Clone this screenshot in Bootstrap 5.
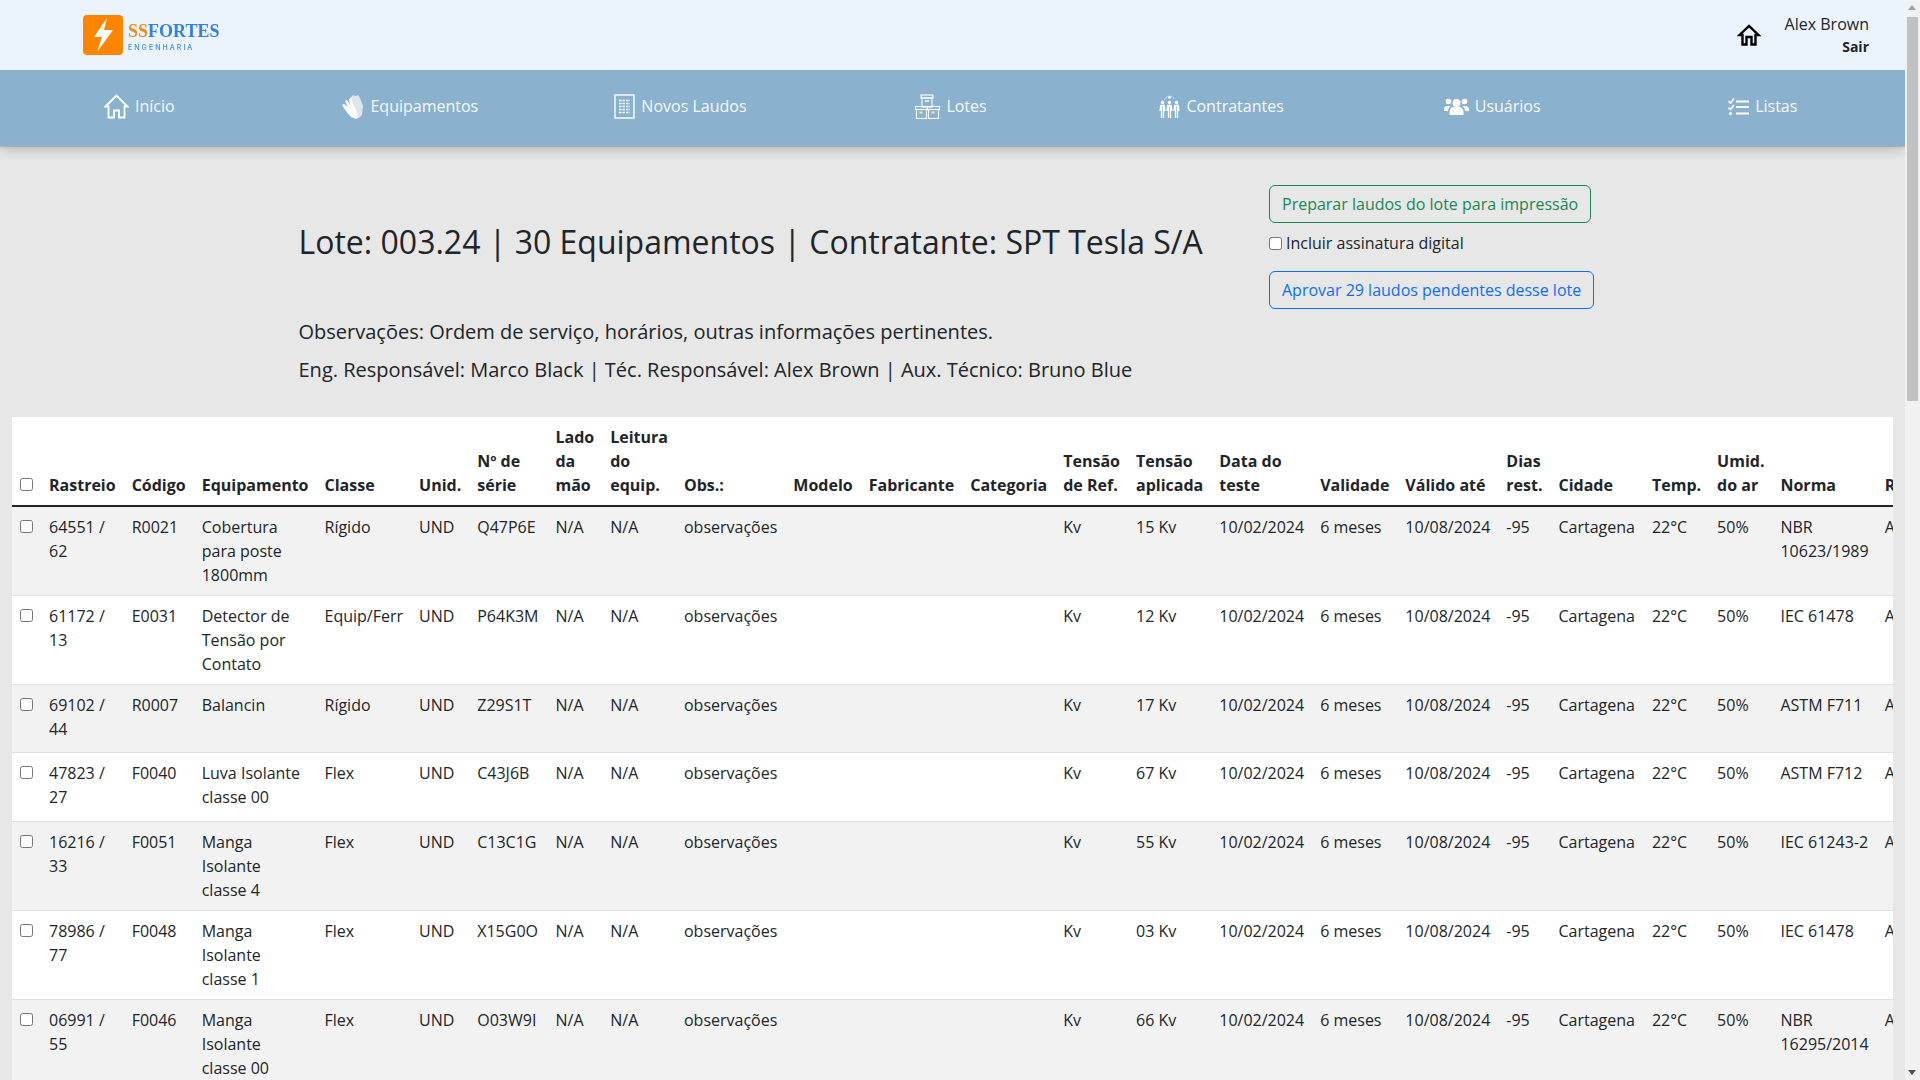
<!DOCTYPE html>
<html lang="pt-BR">
<head>
  <meta charset="UTF-8" />
  <meta name="viewport" content="width=device-width, initial-scale=1" />
  <title>Lote 003.24</title>
  <link href="https://cdn.jsdelivr.net/npm/bootstrap@5.3.3/dist/css/bootstrap.min.css" rel="stylesheet" />
  <style>
    body {
      background-color: #e7e7e7;
      font-family: "Open Sans", sans-serif;
      color: #212529;
      margin-right: 15px;
    }
    .topo {
      height: 70px;
      background-color: #ebf4fc;
      padding: 0 36px 0 83px;
      position: relative;
      z-index: 1;
    }
    .logo-box {
      width: 40px;
      height: 40px;
      background-color: #ff8500;
      border-radius: 4px;
    }
    .logo-texto {
      margin: 6px 0 0 5px;
      filter: blur(.35px);
    }
    .logo-nome {
      font-family: "Liberation Serif", serif;
      font-weight: 700;
      font-size: 18px;
      line-height: 14px;
      color: #2f7fe8;
    }
    .logo-nome span { color: #f28a1c; }
    .logo-sub {
      font-family: "Inter", sans-serif;
      font-size: 7px;
      line-height: 8px;
      letter-spacing: 2.05px;
      font-weight: 500;
      color: #3d8ae6;
      margin-top: 6px;
    }
    .user-nome { line-height: 24px; }
    .user-sair { font-size: 14px; font-weight: 700; line-height: 22px; }
    .menu {
      height: 76px;
      background-color: #8ab1ce;
      padding: 0 7px 0 4px;
      box-shadow: 0 1px 1px rgba(0,0,0,.14), 0 4px 12px rgba(0,0,0,.2);
      position: relative;
    }
    .menu .nav-link {
      height: 76px;
      display: flex;
      align-items: center;
      justify-content: center;
      gap: 6px;
      padding: 0 0 4px;
      color: #f6f9fb;
    }
    .cabecalho {
      padding: 39px 0 0 298.5px;
    }
    .cabecalho-esq { width: 970.5px; }
    .lote-titulo {
      font-size: 32px;
      line-height: 38px;
      font-weight: 400;
      margin: 38px 0 56px;
    }
    .lote-info {
      font-size: 20px;
      line-height: 30px;
      margin-bottom: 8px;
    }
    .assinatura { line-height: 24px; margin: 8px 0 16px; }
    .assinatura input { width: 13px; height: 13px; margin: 0 4px 0 0; vertical-align: -1px; }
    .tabela-caixa {
      margin: 24px 12px 0;
      background-color: #fff;
    }
    .tabela-caixa .table { margin-bottom: 0; }
    .tabela-caixa th { vertical-align: bottom; }
    .tabela-caixa tbody tr { height: 69px; }
    .tabela-caixa tbody tr:nth-child(7n+3) { height: 68px; }
    .tabela-caixa th:nth-child(7), .tabela-caixa td:nth-child(7),
    .tabela-caixa th:nth-child(20), .tabela-caixa td:nth-child(20) { padding-right: 9px; }
    .tabela-caixa input { width: 13px; height: 13px; margin: 0; display: block; margin-top: 5px; }
    .tabela-caixa th input { margin-bottom: 6px; }
    /* the browser that takes the picture hides its real scrollbar */
    .barra-rolagem {
      position: fixed;
      top: 0;
      right: 0;
      bottom: 0;
      width: 15px;
      background-color: #f1f1f1;
    }
    .barra-polegar {
      position: absolute;
      top: 17px;
      left: 2px;
      width: 11px;
      height: 384px;
      background-color: #c1c1c1;
    }
    .barra-seta {
      position: absolute;
      left: 3px;
      width: 0;
      height: 0;
      border-left: 4.500px solid transparent;
      border-right: 4.500px solid transparent;
    }
    .barra-seta-cima { top: 5px; border-bottom: 5px solid #a3a3a3; }
    .barra-seta-baixo { bottom: 5px; border-top: 5px solid #505050; }
  </style>
</head>
<body>

<div class="topo d-flex align-items-center justify-content-between">
  <div class="d-flex align-items-center">
    <div class="logo-box d-flex align-items-center justify-content-center">
      <svg width="28" height="36" viewBox="0 0 28 36"><path fill="#fff" d="M18 1 5 20h8L8 35 24 13h-9z"/></svg>
    </div>
    <div class="logo-texto">
      <div class="logo-nome"><span>SS</span>FORTES</div>
      <div class="logo-sub">ENGENHARIA</div>
    </div>
  </div>
  <div class="d-flex align-items-center">
    <svg class="me-4" width="24" height="22" viewBox="0 0 24 22"><path fill="none" stroke="#000" stroke-width="2.4" d="M2.5 11 12 2l9.500 9H18.500v9.500h-4V13h-5v7.500h-4V11z"/></svg>
    <div class="text-end">
      <div class="user-nome">Alex Brown</div>
      <div class="user-sair">Sair</div>
    </div>
  </div>
</div>

<ul class="nav nav-justified menu">
  <li class="nav-item"><a class="nav-link" href="#">
    <svg width="25" height="25" viewBox="0 0 25 25"><path fill="none" stroke="#fff" stroke-width="1.8" d="M1.500 12.500 12.500 1.500l11 11H20.500v11h-5.500v-7h-5v7H4.500v-11z"/></svg>
    Início</a></li>
  <li class="nav-item"><a class="nav-link" href="#">
    <svg width="23" height="25" viewBox="0 0 23 25"><path fill="#dfe5ea" d="M9 4l3-3 2 1 3-1 2 3 3 8-1 9-3 3-5-3-4-9z"/><path fill="#fff" d="M1 11l2-1 4 3-3-6 2-1 3 5-1-6 2-1 3 8 3 6 1 6-2 1-5-2-5-6z"/></svg>
    Equipamentos</a></li>
  <li class="nav-item"><a class="nav-link" href="#">
    <svg width="21" height="25" viewBox="0 0 21 25"><rect x="1" y="1" width="19" height="23" fill="none" stroke="#fff" stroke-width="1.400"/><path stroke="#fff" stroke-width="1.500" stroke-dasharray="2.500 1" d="M5 6.500h11M5 9.500h11M5 12.500h11M5 15.500h11M5 18.500h11"/></svg>
    Novos Laudos</a></li>
  <li class="nav-item"><a class="nav-link" href="#">
    <svg width="25" height="25" viewBox="0 0 25 25"><g fill="none" stroke="#fff" stroke-width="1.100"><rect x="6" y="1" width="12" height="3"/><rect x="7" y="4" width="10" height="9"/><rect x=".5" y="12.500" width="12" height="3"/><rect x="12.500" y="12.500" width="12" height="3"/><rect x="1.500" y="15.500" width="10" height="9"/><rect x="13.500" y="15.500" width="10" height="9"/></g><path stroke="#dfe9f1" stroke-width="2" d="M10 7h4M4.500 18.500h3M16.500 18.500h3"/></svg>
    Lotes</a></li>
  <li class="nav-item"><a class="nav-link" href="#">
    <svg width="21" height="25" viewBox="0 0 21 25"><path fill="none" stroke="#fff" stroke-width=".8" stroke-dasharray="1.500 1" d="M5.500 5.500a5.500 5.500 0 0 1 10 0"/><circle cx="10.500" cy="3.500" r="1.300" fill="#fff"/><g fill="#fff"><circle cx="3.500" cy="8.500" r="1.700"/><circle cx="10.500" cy="8.500" r="1.700"/><circle cx="17.500" cy="8.500" r="1.700"/></g><g fill="none" stroke="#fff" stroke-width="1.300"><path d="M1 17l.8-5.500h3.400L6 17M2.500 12v12M4.500 12v12"/><path d="M8 17l.8-5.500h3.400L13 17M9.500 12v12M11.500 12v12"/><path d="M15 17l.8-5.500h3.400L20 17M16.500 12v12M18.500 12v12"/></g></svg>
    Contratantes</a></li>
  <li class="nav-item"><a class="nav-link" href="#">
    <svg width="25" height="17" viewBox="0 0 25 17"><g fill="#fff"><circle cx="12.500" cy="5" r="4"/><circle cx="4.500" cy="3.500" r="2.800"/><circle cx="20.500" cy="3.500" r="2.800"/><path d="M5.500 17v-3c0-3 2-5 4-5h6c2 0 4 2 4 5v3zM0 11c0-2 1.500-3 3-3h4c-1.500 1-3 2.500-3 5H0zM25 11c0-2-1.500-3-3-3h-4c1.500 1 3 2.500 3 5h4z"/></g></svg>
    Usuários</a></li>
  <li class="nav-item"><a class="nav-link" href="#">
    <svg width="21" height="17" viewBox="0 0 21 17"><g fill="none" stroke="#fff"><path stroke-width="1.600" d="M.5 3 2.500 5 6 .5M.5 9.500 2.500 11.500 6 7"/><path stroke-width="1.800" d="M8 3.500h13M8 9h13M8 15.500h13"/></g><circle cx="2.500" cy="15.500" r="1.500" fill="#fff"/></svg>
    Listas</a></li>
</ul>

<div class="cabecalho d-flex">
  <div class="cabecalho-esq">
    <h2 class="lote-titulo">Lote: 003.24 | 30 Equipamentos | Contratante: SPT Tesla S/A</h2>
    <p class="lote-info">Observações: Ordem de serviço, horários, outras informações pertinentes.</p>
    <p class="lote-info">Eng. Responsável: Marco Black | Téc. Responsável: Alex Brown | Aux. Técnico: Bruno Blue</p>
  </div>
  <div>
    <button type="button" class="btn btn-outline-success">Preparar laudos do lote para impressão</button>
    <div class="assinatura"><input type="checkbox" id="assinatura"><label for="assinatura">Incluir assinatura digital</label></div>
    <button type="button" class="btn btn-outline-primary">Aprovar 29 laudos pendentes desse lote</button>
  </div>
</div>

<div class="tabela-caixa table-responsive">
  <table class="table table-striped">
    <thead>
      <tr>
        <th><input type="checkbox"></th>
        <th>Rastreio</th>
        <th>Código</th>
        <th>Equipamento</th>
        <th>Classe</th>
        <th>Unid.</th>
        <th>Nº de série</th>
        <th>Lado da mão</th>
        <th>Leitura do equip.</th>
        <th>Obs.:</th>
        <th>Modelo</th>
        <th>Fabricante</th>
        <th>Categoria</th>
        <th>Tensão de Ref.</th>
        <th>Tensão aplicada</th>
        <th>Data do teste</th>
        <th>Validade</th>
        <th>Válido até</th>
        <th>Dias rest.</th>
        <th>Cidade</th>
        <th>Temp.</th>
        <th>Umid. do ar</th>
        <th>Norma</th>
        <th>Resultado</th>
      </tr>
    </thead>
    <tbody class="table-group-divider" id="linhas"></tbody>
  </table>
</div>

<div class="barra-rolagem">
  <div class="barra-seta barra-seta-cima"></div>
  <div class="barra-polegar"></div>
  <div class="barra-seta barra-seta-baixo"></div>
</div>

<script>
  const equipamentos = [
    ["64551 / 62", "R0021", "Cobertura para poste 1800mm", "Rígido", "Q47P6E", "15 Kv", "NBR 10623/1989"],
    ["61172 / 13", "E0031", "Detector de Tensão por Contato", "Equip/Ferr", "P64K3M", "12 Kv", "IEC 61478"],
    ["69102 / 44", "R0007", "Balancin", "Rígido", "Z29S1T", "17 Kv", "ASTM F711"],
    ["47823 / 27", "F0040", "Luva Isolante classe 00", "Flex", "C43J6B", "67 Kv", "ASTM F712"],
    ["16216 / 33", "F0051", "Manga Isolante classe 4", "Flex", "C13C1G", "55 Kv", "IEC 61243-2"],
    ["78986 / 77", "F0048", "Manga Isolante classe 1", "Flex", "X15G0O", "03 Kv", "IEC 61478"],
    ["06991 / 55", "F0046", "Manga Isolante classe 00", "Flex", "O03W9I", "66 Kv", "NBR 16295/2014"]
  ];

  let linhas = "";
  for (let i = 0; i < 30; i++) {
    const e = equipamentos[i % equipamentos.length];
    linhas += `<tr>
      <td><input type="checkbox"></td>
      <td>${e[0]}</td><td>${e[1]}</td><td>${e[2]}</td><td>${e[3]}</td><td>UND</td><td>${e[4]}</td>
      <td>N/A</td><td>N/A</td><td>observações</td><td></td><td></td><td></td>
      <td>Kv</td><td>${e[5]}</td><td>10/02/2024</td><td>6 meses</td><td>10/08/2024</td><td>-95</td>
      <td>Cartagena</td><td>22°C</td><td>50%</td><td>${e[6]}</td><td>Aprovado</td>
    </tr>`;
  }
  document.getElementById("linhas").innerHTML = linhas;
</script>

<script src="https://cdn.jsdelivr.net/npm/bootstrap@5.3.3/dist/js/bootstrap.bundle.min.js"></script>
</body>
</html>
